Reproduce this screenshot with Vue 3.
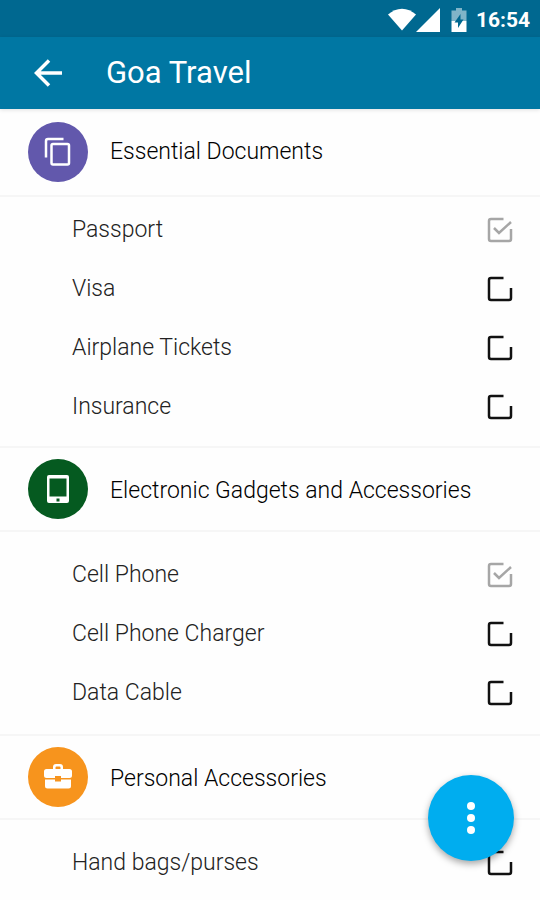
<script setup>
import { ref } from 'vue'

const sections = ref([
  {
    title: 'Essential Documents',
    icon: 'copy',
    items: [
      { name: 'Passport', done: true },
      { name: 'Visa', done: false },
      { name: 'Airplane Tickets', done: false },
      { name: 'Insurance', done: false },
    ],
  },
  {
    title: 'Electronic Gadgets and Accessories',
    icon: 'tablet',
    items: [
      { name: 'Cell Phone', done: true },
      { name: 'Cell Phone Charger', done: false },
      { name: 'Data Cable', done: false },
    ],
  },
  {
    title: 'Personal Accessories',
    icon: 'case',
    items: [{ name: 'Hand bags/purses', done: false }],
  },
])
</script>

<template>
  <div class="screen">
    <div class="status">
      <svg class="wifi" viewBox="0 0 28 23" aria-hidden="true">
        <path d="M0 6.500C4 3 9 .7 14 .7S24 3 28 6.500L14 22.500Z" />
      </svg>
      <svg class="signal" viewBox="0 0 24 24" aria-hidden="true">
        <path d="M24 0V24H0Z" />
      </svg>
      <svg class="battery" viewBox="0 0 16 24" aria-hidden="true">
        <path class="faded" d="M5 0h6v2.500h4.500V13H.5V2.500H5Z" />
        <path d="M.5 13h15v11H.5Z" />
        <path class="bolt" d="M9.500 6 3.500 14.500H7V20l5.500-8.500H9.500Z" />
      </svg>
      <span class="clock">16:54</span>
    </div>

    <header class="bar">
      <button class="back" type="button" aria-label="Back">
        <svg viewBox="0 0 28 28" aria-hidden="true">
          <path d="M28 14H3M15 1.500 2.500 14 15 26.500" />
        </svg>
      </button>
      <h1>Goa Travel</h1>
    </header>

    <main>
      <section v-for="section in sections" :key="section.title" :class="section.icon">
        <div class="head">
          <span class="badge">
            <svg v-if="section.icon === 'copy'" viewBox="0 0 30 30" aria-hidden="true">
              <path class="line" d="M3 20.500V4Q3 2 5 2H20.500" />
              <rect class="line" x="8.500" y="7" width="17.500" height="20.500" rx="1.500" />
            </svg>
            <svg v-else-if="section.icon === 'tablet'" viewBox="0 0 30 30" aria-hidden="true">
              <path
                class="solid"
                fill-rule="evenodd"
                d="M6 1h18q2 0 2 2v24q0 2-2 2H6q-2 0-2-2V3q0-2 2-2ZM6.500 4.500v18h17v-18ZM13.500 24.500v3h3v-3Z"
              />
            </svg>
            <svg v-else viewBox="0 0 30 30" aria-hidden="true">
              <path
                class="solid"
                fill-rule="evenodd"
                d="M10 7V5Q10 2 13 2h4q3 0 3 3v2h6.500q2.500 0 2.500 2.500v4q0 2.500-2.500 2.500H18v-2h-6v2H3.500Q1 16 1 13.500v-4Q1 7 3.500 7ZM12.500 7h5V5.500q0-1-1-1h-3q-1 0-1 1Z"
              />
              <path class="solid" d="M2 17.500h10V19.500h6v-2h10V24q0 2.500-2.500 2.500h-21Q2 26.500 2 24Z" />
            </svg>
          </span>
          <h2>{{ section.title }}</h2>
        </div>
        <ul>
          <li v-for="item in section.items" :key="item.name">
            <label>
              <span>{{ item.name }}</span>
              <span class="tick" :class="{ done: item.done }">
                <input v-model="item.done" type="checkbox" />
                <svg viewBox="0 0 26 26" aria-hidden="true">
                  <path d="M16.500 2H4Q2 2 2 4v18q0 2 2 2h18q2 0 2-2V12" />
                  <path v-if="item.done" d="m7 11 5 5L24 5" />
                </svg>
              </span>
            </label>
          </li>
        </ul>
      </section>
    </main>

    <button class="fab" type="button" aria-label="More options">
      <svg viewBox="0 0 10 34" aria-hidden="true">
        <circle cx="5" cy="5" r="4" />
        <circle cx="5" cy="17" r="4" />
        <circle cx="5" cy="29" r="4" />
      </svg>
    </button>
  </div>
</template>

<style>
body {
  margin: 0;
  background: #fff;
}
</style>

<style scoped>
.screen {
  font-family: Roboto, "Liberation Sans", sans-serif;
  background: #fefefe;
  color: #222;
  min-height: 100vh;
}

.status {
  display: flex;
  align-items: center;
  justify-content: flex-end;
  box-sizing: border-box;
  height: 37px;
  padding: 2px 10px 0 0;
  background: #006890;
  color: #fff;
}

.status svg {
  fill: #fff;
}

.wifi {
  width: 28px;
  height: 23px;
}

.signal {
  width: 24px;
  height: 24px;
}

.battery {
  width: 16px;
  height: 24px;
  margin: 0 9px 0 11px;
}

.battery .faded {
  fill: #80b4c8;
}

.battery .bolt {
  fill: #006890;
}

.clock {
  font-size: 21px;
  font-weight: 700;
  line-height: 24px;
}

.bar {
  display: flex;
  align-items: center;
  height: 72px;
  padding: 0 34px;
  background: #0077a3;
  color: #fff;
  box-shadow: 0 1px 4px rgba(0, 0, 0, 0.12);
}

.back {
  display: flex;
  padding: 0;
  border: 0;
  background: none;
}

.back svg {
  width: 28px;
  height: 28px;
  fill: none;
  stroke: #fff;
  stroke-width: 3.500;
}

h1,
h2 {
  margin: 0;
  font-weight: 400;
}

h1 {
  margin-left: 44px;
  font-size: 31px;
  line-height: 40px;
}

.head {
  display: flex;
  align-items: center;
  gap: 22px;
  box-sizing: border-box;
  height: 84px;
  padding: 0 28px;
  border-bottom: 2px solid #f6f6f6;
}

.badge {
  display: flex;
  align-items: center;
  justify-content: center;
  flex: none;
  width: 60px;
  height: 60px;
  border-radius: 50%;
}

.badge svg {
  width: 30px;
  height: 30px;
}

.line {
  fill: none;
  stroke: #fff;
  stroke-width: 2.500;
}

.solid {
  fill: #fff;
}

.copy .badge {
  background: #6258ac;
}

.tablet .badge {
  background: #055a20;
}

.case .badge {
  background: #f7941d;
}

h2 {
  padding-top: 4px;
  color: #000;
  font-size: 23px;
  font-weight: 300;
  line-height: 32px;
}

ul {
  margin: 0;
  padding: 13px 0 12px;
  list-style: none;
  border-bottom: 2px solid #f6f6f6;
}

.copy .head {
  height: 88px;
}

.copy h2 {
  padding-top: 0;
}

.copy ul {
  padding: 3px 0 10px;
}

.case ul {
  border-bottom: 0;
}

label {
  display: flex;
  align-items: center;
  justify-content: space-between;
  height: 59px;
  padding: 0 27px 0 72px;
  font-size: 23px;
  font-weight: 300;
  line-height: 32px;
}

.tick {
  display: grid;
  width: 26px;
  height: 26px;
  color: #111;
}

.tick.done {
  color: #a6a6a6;
}

.tick input,
.tick svg {
  grid-area: 1 / 1;
  width: 26px;
  height: 26px;
  margin: 0;
}

.tick input {
  appearance: none;
}

.tick svg {
  fill: none;
  stroke: currentColor;
  stroke-width: 2.500;
  pointer-events: none;
}

.fab {
  position: fixed;
  right: 26px;
  bottom: 39px;
  display: flex;
  align-items: center;
  justify-content: center;
  width: 86px;
  height: 86px;
  padding: 0;
  border: 0;
  border-radius: 50%;
  background: #00adef;
  box-shadow: 0 3px 7px rgba(0, 0, 0, 0.35);
}

.fab svg {
  width: 10px;
  height: 34px;
  fill: #fff;
}
</style>
